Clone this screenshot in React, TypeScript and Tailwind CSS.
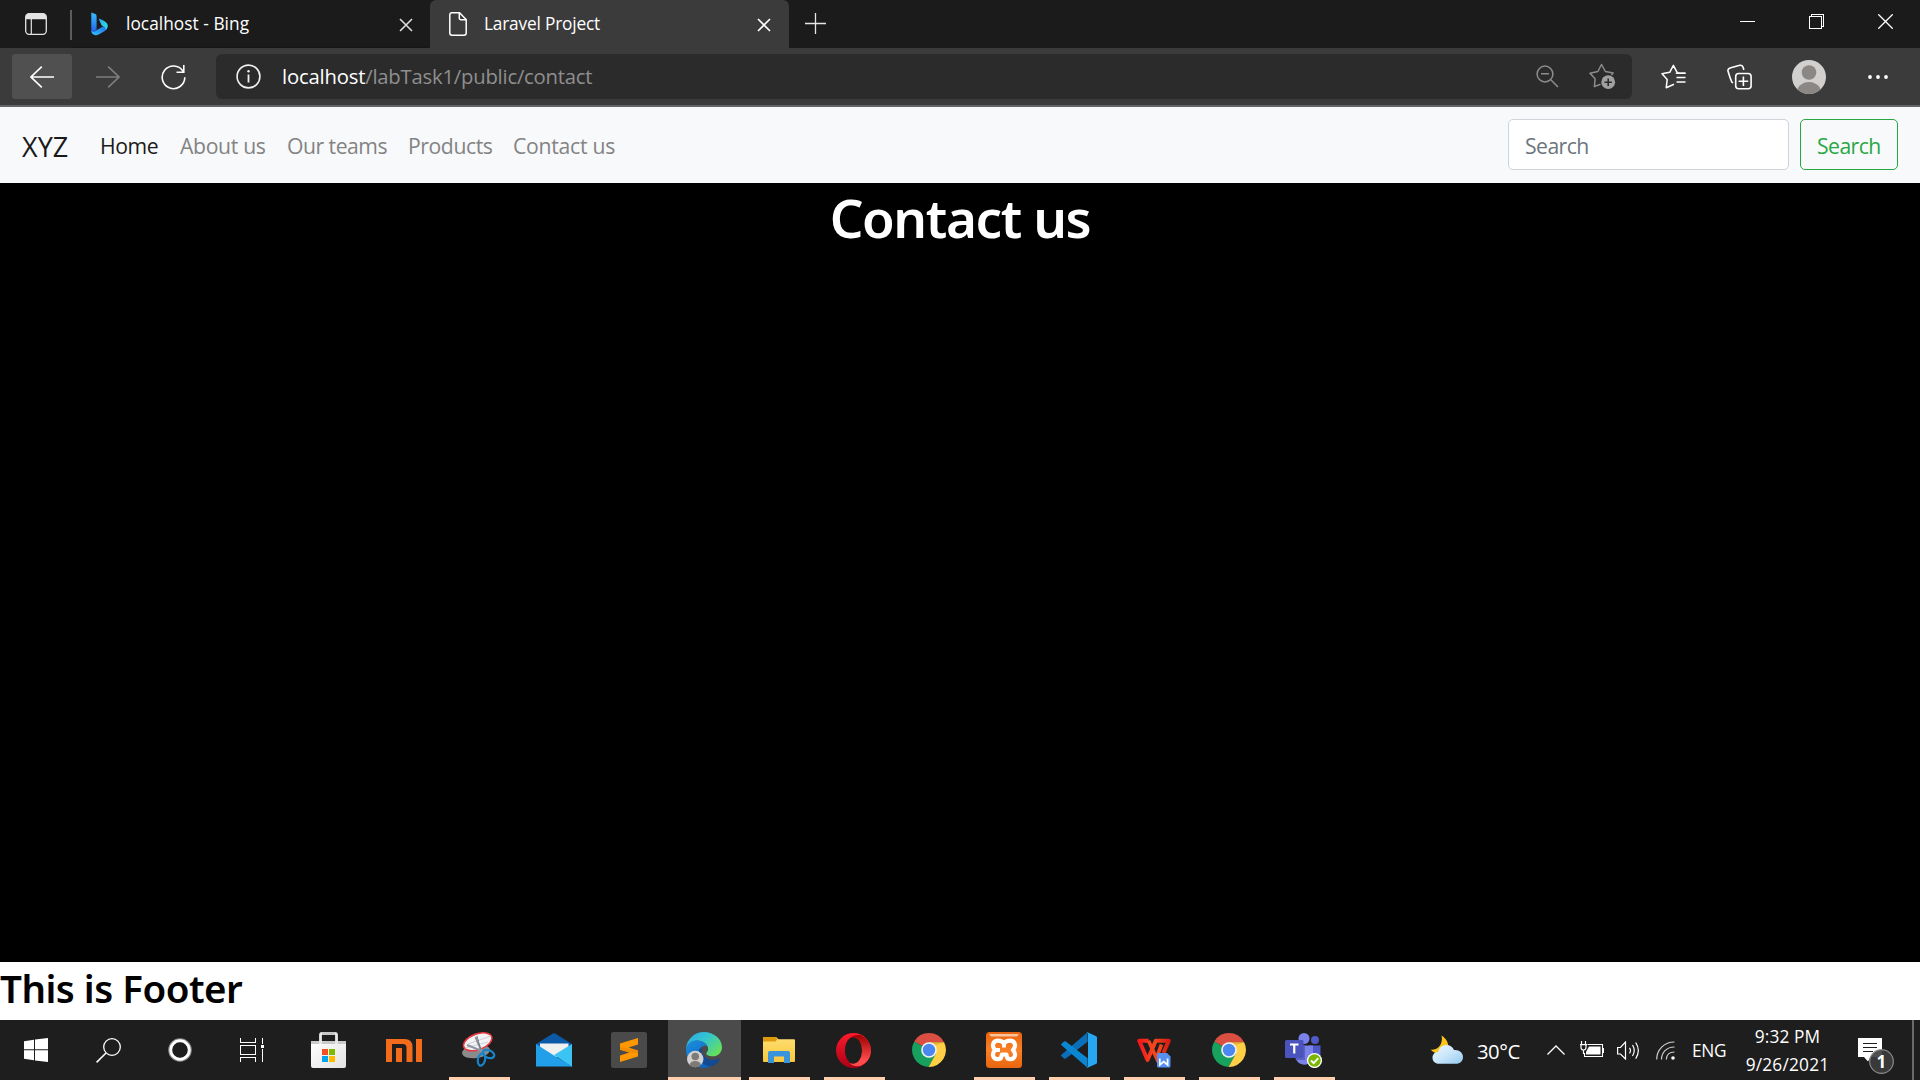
import React from "react";

type P = { className?: string };

const stroke = { fill: "none", stroke: "currentColor", strokeWidth: 1.5 };

/* ---------- browser chrome icons ---------- */

const TabActionsIcon = () => (
  <svg width="22" height="22" viewBox="0 0 22 22" className="text-[#e4e4e4]">
    <rect x="0.7" y="0.7" width="20.6" height="20.6" rx="3.5" {...stroke} strokeWidth={1.3} />
    <path d="M0.7 6.3V4.2A3.5 3.5 0 0 1 4.2 0.7h13.6a3.5 3.5 0 0 1 3.5 3.5v2.1z" fill="currentColor" />
    <path d="M6.3 6v15.300" {...stroke} strokeWidth={1.2} />
  </svg>
);

const BingIcon = () => (
  <svg width="17" height="24" viewBox="0 0 17 24">
    <defs>
      <linearGradient id="bingStem" x1="0" y1="0" x2="0" y2="1">
        <stop offset="0" stopColor="#37bdff" />
        <stop offset="0.55" stopColor="#2b8bf5" />
        <stop offset="1" stopColor="#1d56e8" />
      </linearGradient>
      <linearGradient id="bingTail" x1="0" y1="1" x2="1" y2="0">
        <stop offset="0" stopColor="#2fc5ff" />
        <stop offset="0.5" stopColor="#2a94f0" />
        <stop offset="1" stopColor="#1b63e0" />
      </linearGradient>
      <linearGradient id="bingWing" x1="0" y1="0" x2="1" y2="1">
        <stop offset="0" stopColor="#2aa7ea" />
        <stop offset="1" stopColor="#2ee8e2" />
      </linearGradient>
    </defs>
    <path d="M0.500 0.600 4.300 1.900Q5.600 2.500 5.600 4V17.500L1.600 21.500Q0.300 20.200 0.300 18.400V1Z" fill="url(#bingStem)" />
    <path d="M5.600 18.200 11 15Q13.600 13.600 15.900 12.300C17 15 16.200 17.400 13.800 18.900L7.600 22.600C4.600 24.200 0.300 22.600 0.300 18.400 1.500 20.500 3.700 19.800 5.600 18.200Z" fill="url(#bingTail)" />
    <path d="M8 7.400C7.700 6.500 8.400 6.700 8.900 6.900 12.500 8.300 15.200 9.600 16.200 11.800 17.300 14.200 16.200 16.700 14.900 17.900 15 15.700 13.700 14.700 10.700 13.500 9.600 11.400 8.900 9.600 8 7.400Z" fill="url(#bingWing)" />
  </svg>
);

const CloseIcon = ({ className }: P) => (
  <svg width="14" height="14" viewBox="0 0 14 14" className={className}>
    <path d="M1 1l12 12M13 1 1 13" {...stroke} strokeWidth={1.6} />
  </svg>
);

const FileIcon = () => (
  <svg width="18" height="24" viewBox="0 0 18 24" className="text-white">
    <path d="M3 0.800h7.500L17.200 7.500V21a2.200 2.200 0 0 1-2.200 2.200H3A2.200 2.200 0 0 1 0.800 21V3A2.200 2.200 0 0 1 3 0.800ZM10.300 1v5.200a1.600 1.600 0 0 0 1.600 1.600H17" {...stroke} />
  </svg>
);

const PlusIcon = () => (
  <svg width="21" height="21" viewBox="0 0 21 21" className="text-[#e6e6e6]">
    <path d="M10.500 0v21M0 10.500h21" {...stroke} strokeWidth={1.300} />
  </svg>
);

const ArrowIcon = ({ className }: P) => (
  <svg width="24" height="22" viewBox="0 0 24 22" className={className}>
    <path d="M24 11H1M11.800 0.600 1 11l10.800 10.400" {...stroke} strokeWidth={1.6} />
  </svg>
);

const ReloadIcon = () => (
  <svg width="25" height="26" viewBox="0 0 25 26" className="text-white">
    <path d="M22 7.200A11.300 11.300 0 1 0 23.800 13.300M22.800 1v7.200H15.500" {...stroke} strokeWidth={1.6} />
  </svg>
);

const InfoIcon = () => (
  <svg width="25" height="25" viewBox="0 0 25 25" className="text-[#f0f0f0]">
    <circle cx="12.500" cy="12.500" r="11.400" {...stroke} strokeWidth={1.6} />
    <path d="M12.500 10.500v8" {...stroke} strokeWidth={1.8} />
    <circle cx="12.500" cy="7.200" r="1.200" fill="currentColor" />
  </svg>
);

const ZoomOutIcon = () => (
  <svg width="23" height="23" viewBox="0 0 23 23" className="text-[#8d8d8d]">
    <circle cx="9" cy="9" r="7.900" {...stroke} />
    <path d="M14.800 14.800 22 22M5 8.800h8" {...stroke} />
  </svg>
);

const AddFavoriteIcon = () => (
  <svg width="27" height="27" viewBox="0 0 27 27" className="text-[#8d8d8d]">
    <path d="M11.500 21.200 5.400 23.600 6.100 15.800 1 10.200 8.900 8.500 12.500 1.500 16.400 8.500 24.200 9.900 22.500 12" {...stroke} strokeLinejoin="round" />
    <circle cx="19.200" cy="19.200" r="6.900" fill="#a0a0a0" />
    <path d="M19.200 15.500v7.400M15.500 19.200h7.400" fill="none" stroke="#2b2b2b" strokeWidth="1.600" />
  </svg>
);

const FavoritesIcon = () => (
  <svg width="25" height="25" viewBox="0 0 25 25" className="text-white">
    <path d="M13 20.200 5.200 23.800 6.200 15.400 1 9.800 8.700 8.300 12.400 1.300 15.800 7.800Q16.200 8.800 17.500 9.300H24.500" {...stroke} strokeLinejoin="round" />
    <path d="M14.800 9.300H24.500M15.500 13.500H24.500M15.500 18H24.500" {...stroke} strokeWidth={1.6} />
  </svg>
);

const CollectionsIcon = () => (
  <svg width="25" height="26" viewBox="0 0 25 26" className="text-white">
    <rect x="8.700" y="9.500" width="15.400" height="15.300" rx="3" {...stroke} strokeWidth={1.6} />
    <path d="M16.400 12.500v9.600M11.600 17.200h9.600" {...stroke} strokeWidth={1.6} />
    <path d="M6 19 4.800 18Q3 14 1.100 7.500C0.600 5.800 1.300 4.500 3 4L12.800 1.300C14.500 0.900 15.700 1.700 16.200 3.400L16.800 6" {...stroke} strokeWidth={1.6} />
  </svg>
);

const Avatar = ({ className }: P) => (
  <svg viewBox="0 0 34 34" className={className}>
    <clipPath id="avatarClip"><circle cx="17" cy="17" r="17" /></clipPath>
    <g clipPath="url(#avatarClip)">
      <rect width="34" height="34" fill="#d2d0ce" />
      <circle cx="17" cy="12.500" r="7.300" fill="#8b8785" />
      <ellipse cx="17" cy="33.500" rx="12.500" ry="11.500" fill="#8b8785" />
    </g>
  </svg>
);

const DotsIcon = () => (
  <svg width="20" height="4" viewBox="0 0 20 4" fill="#fff">
    <circle cx="2" cy="2" r="1.900" /><circle cx="10" cy="2" r="1.900" /><circle cx="18" cy="2" r="1.900" />
  </svg>
);

/* ---------- taskbar icons ---------- */

const StartIcon = () => (
  <svg width="24" height="24" viewBox="0 0 24 24" fill="#fff">
    <path d="M0 3.300 10 1.700V11.200H0zM11 1.600 24 0V11.200H11zM0 12.200H10V22.300L0 20.700zM11 12.200H24V24L11 22.400z" />
  </svg>
);

const SearchIcon = () => (
  <svg width="25" height="25" viewBox="0 0 25 25" className="text-white">
    <circle cx="16" cy="9" r="8.300" {...stroke} strokeWidth={1.3} />
    <path d="M10 15 0.600 24.400" {...stroke} strokeWidth={1.5} />
  </svg>
);

const CortanaIcon = () => (
  <svg width="24" height="24" viewBox="0 0 24 24">
    <circle cx="12" cy="12" r="9.800" fill="none" stroke="#8a8a8a" strokeWidth="4" />
    <circle cx="12" cy="12" r="9.300" fill="none" stroke="#fff" strokeWidth="2.700" />
  </svg>
);

const TaskViewIcon = () => (
  <svg width="24" height="24" viewBox="0 0 24 24" className="text-white" shapeRendering="crispEdges">
    <path d="M0.500 0V4.500H15.500V0M0.500 24V19.500H15.500V24M0.500 7.500H15.500V16.500H0.500ZM22.500 0V6M22.500 11V24" {...stroke} strokeWidth={1} />
    <rect x="21" y="7" width="3" height="3" fill="#fff" />
  </svg>
);

const StoreIcon = () => (
  <svg width="35" height="36" viewBox="0 0 35 36">
    <defs><linearGradient id="bag" x1="0" y1="0" x2="1" y2="1"><stop offset="0" stopColor="#fff" /><stop offset="1" stopColor="#e2e2e2" /></linearGradient></defs>
    <path d="M0 9H35V34Q35 36 33 36H2Q0 36 0 34Z" fill="url(#bag)" />
    <path d="M0 9H35V12H0Z" fill="#c9cbcb" />
    <path d="M9.500 12V3Q9.500 1.500 11 1.500H24Q25.500 1.500 25.500 3V12" fill="none" stroke="#e9e9e9" strokeWidth="2.800" />
    <path d="M11 1.500H24" stroke="#c4c6c6" strokeWidth="2.800" />
    <path d="M11 17h6v6h-6z" fill="#f25022" /><path d="M18 17h6v6h-6z" fill="#7fba00" />
    <path d="M11 24h6v6h-6z" fill="#00a4ef" /><path d="M18 24h6v6h-6z" fill="#ffb900" />
  </svg>
);

const MiIcon = () => (
  <svg width="36" height="23" viewBox="0 0 36 23" fill="#f26c1c">
    <path d="M0 0H18.500Q26.500 0 26.500 8V23H20.500V8.500Q20.500 5 17 5H6V23H0ZM10 9H16V23H10ZM30 0H36V23H30Z" />
  </svg>
);

const SnipIcon = () => (
  <svg width="36" height="36" viewBox="0 0 36 36">
    <ellipse cx="15" cy="19.500" rx="14" ry="6.500" transform="rotate(-8 15 19.500)" fill="#8b8b8b" />
    <ellipse cx="16.700" cy="9.800" rx="14.800" ry="7.900" transform="rotate(-20 16.700 9.800)" fill="#f4f4f6" stroke="#e83a42" strokeWidth="1.600" />
    <path d="M7 12 30 4M4 16 27 10" stroke="#c5cbd3" strokeWidth="0.900" />
    <path d="M14.500 5 21 20M6 13 21 19" stroke="#8f959e" strokeWidth="2" />
    <path d="M16 4 19.500 17.500" stroke="#6a7079" strokeWidth="0.800" />
    <ellipse cx="27.500" cy="22" rx="6" ry="3.800" transform="rotate(22 27.500 22)" fill="none" stroke="#1785cb" strokeWidth="2.200" />
    <ellipse cx="20.500" cy="27.500" rx="3.600" ry="6.200" transform="rotate(12 20.500 27.500)" fill="none" stroke="#1785cb" strokeWidth="2.200" />
  </svg>
);

const MailIcon = () => (
  <svg width="36" height="34" viewBox="0 0 36 34">
    <path d="M0 11 16.500 0.700Q18 0 19.500 0.700L36 11V17H0Z" fill="#0c59a8" />
    <path d="M4 10.500H32.500V15L18 26 4 15Z" fill="#f0f0f0" />
    <path d="M36 11 18 22 36 34Z" fill="#3bc4f3" />
    <path d="M0 11 18 22.500 36 33.500H0Z" fill="#219fe8" />
  </svg>
);

const SublimeIcon = () => (
  <svg width="36" height="36" viewBox="0 0 36 36">
    <rect width="36" height="36" rx="2.500" fill="#4a4a4a" />
    <path d="M9 11.500 27 6V12.500L17.500 15.600 27 18.500V24.500L9 30V23.500L18.500 20.600 9 17.700Z" fill="#ff9800" />
    <path d="M9 17.700V15L27 18.500V21L18.500 20.600Z" fill="#f08c00" />
  </svg>
);

const EdgeIcon = () => (
  <svg width="36" height="36" viewBox="0 0 36 36">
    <defs>
      <linearGradient id="edgeTop" x1="0" y1="0" x2="1" y2="0.700"><stop offset="0" stopColor="#2aa8e8" /><stop offset="0.500" stopColor="#34c6cf" /><stop offset="1" stopColor="#66e05a" /></linearGradient>
      <linearGradient id="edgeMid" x1="0" y1="0" x2="0.600" y2="1"><stop offset="0" stopColor="#1b8fe0" /><stop offset="1" stopColor="#1064c0" /></linearGradient>
    </defs>
    <path d="M0 17C0.500 7.500 8.300 0 18 0S36 7 36 15.200C36 20.800 31.600 24.300 26.800 24.300 22.500 24.300 20.300 22.700 20.300 21.500 20.300 20.500 22.200 19.600 22.200 17 22.200 12.500 17 8.500 11 8.500 5.500 8.500 1.500 12 0 17Z" fill="url(#edgeTop)" />
    <path d="M0 17C1.500 11 6.500 8.500 11 8.500 17 8.500 20.300 12 21.200 14.200 17.500 12.500 12.500 16 12.500 21.500 12.500 28.500 18.500 34 25 34 22.800 35.300 20.400 36 18 36 8 36 -0.500 28 0 17Z" fill="url(#edgeMid)" />
    <path d="M12.500 21.500C12.500 19 13.500 16.500 15.500 15 14.500 22 20 28 27 28 30 28 32 26.600 33 26.600 34.200 26.600 33 29.300 31 31.300 28.500 33.800 26 34.500 23.500 34.200 17 33.500 12.500 28 12.500 21.500Z" fill="#134a94" />
    <g transform="translate(1 18.500) scale(0.5)">
      <circle cx="16.500" cy="17" r="16.500" fill="#d2d0ce" />
      <circle cx="16.500" cy="12" r="7.500" fill="#7d7a78" />
      <path d="M5 29Q7 21 16.500 21T28 29Q23 33.500 16.500 33.500T5 29Z" fill="#7d7a78" />
    </g>
  </svg>
);

const ExplorerIcon = () => (
  <svg width="32" height="26" viewBox="0 0 32 26">
    <defs><linearGradient id="folder" x1="0" y1="0" x2="0" y2="1"><stop offset="0" stopColor="#ffde72" /><stop offset="1" stopColor="#f8c83a" /></linearGradient></defs>
    <path d="M0 1Q0 0 1 0H13L15.500 2.300H31Q32 2.300 32 3.300V24Q32 25 31 25H1Q0 25 0 24Z" fill="url(#folder)" />
    <path d="M0 1Q0 0 1 0H12.500L14.500 2 12.500 4.500H0Z" fill="#dd9a0b" />
    <path d="M5 26V16Q5 14 7 14H25Q27 14 27 16V26H21V19.500H11V26Z" fill="#3a94dc" />
  </svg>
);

const OperaIcon = () => (
  <svg width="35" height="35" viewBox="0 0 35 35">
    <defs>
      <linearGradient id="operaA" x1="0" y1="0" x2="0" y2="1"><stop offset="0" stopColor="#ff1b2d" /><stop offset="1" stopColor="#a70014" /></linearGradient>
      <linearGradient id="operaB" x1="0" y1="0" x2="0" y2="1"><stop offset="0" stopColor="#9c0000" /><stop offset="0.800" stopColor="#ff4b4b" /></linearGradient>
    </defs>
    <path fillRule="evenodd" d="M17.500 0A17.500 17.500 0 1 0 17.500 35 17.500 17.500 0 0 0 17.500 0ZM18 3.800C22.500 3.800 26 9.500 26 17.500S22.500 31.200 18 31.200 9 25.500 9 17.500 13 3.800 18 3.800Z" fill="url(#operaA)" />
    <path d="M13.500 5.200C16 2.300 21 1.800 24 2 30 4.500 35 10 35 17.500 35 25 30 31 24 33 20 33.500 16 33 13.500 30 20 33 26 27 26 17.500S20 2.500 13.500 5.200Z" fill="url(#operaB)" />
  </svg>
);

const ChromeIcon = () => (
  <svg width="34" height="34" viewBox="0 0 34 34">
    <path d="M17 17 2.300 8.500A17 17 0 0 1 31.800 8.700L32 9.300H17Z" fill="#db4f43" />
    <path d="M17 17 2.300 8.500A17 17 0 0 0 16.600 34L24 21Z" fill="#17a05e" />
    <path d="M17 9.300H32.100A17 17 0 0 1 16.600 34L23.700 21Z" fill="#ffd045" />
    <path d="M17 9.300H32.100L24 12Z" fill="#c9912b" opacity="0.450" />
    <circle cx="17" cy="17" r="7.800" fill="#f3f3f3" />
    <circle cx="17" cy="17" r="6.200" fill="#4a87f0" />
  </svg>
);

const XamppIcon = () => (
  <svg width="36" height="36" viewBox="0 0 36 36">
    <defs><linearGradient id="xampp" x1="0" y1="0" x2="0" y2="1"><stop offset="0" stopColor="#e8640f" /><stop offset="0.500" stopColor="#fb7f25" /><stop offset="1" stopColor="#e8660f" /></linearGradient></defs>
    <rect width="36" height="36" rx="3.500" fill="url(#xampp)" />
    <path d="M3 2H33L31 4.500H5Z" fill="#fcc49a" />
    <path d="M18 11.500C16.500 9.300 14.500 8.700 12 8.700 7 8.700 5.300 14 9 18 5.300 22 7 27.200 12 27.200 14.500 27.200 15.800 25.500 15.800 22.500H20.500C20.500 25.500 21.500 27.200 24 27.200 29 27.200 30.700 22 27 18 30.700 14 29 8.700 24 8.700 21.500 8.700 19.500 9.300 18 11.500Z" fill="none" stroke="#fff" strokeWidth="4.200" strokeLinejoin="round" />
    <path d="M18 12V15.500M9.500 18H14" fill="none" stroke="#fff" strokeWidth="3.800" />
  </svg>
);

const VsCodeIcon = () => (
  <svg width="36" height="36" viewBox="0 0 36 36">
    <path d="M26.500 0.200V10L4.500 26.700Q3.700 27 3 26.500L0.500 24.300Q-0.300 23.500 0.500 22.700Z" fill="#0a6fb8" />
    <path d="M26.500 35.800V26L4.500 9.300Q3.700 9 3 9.500L0.500 11.700Q-0.300 12.500 0.500 13.300Z" fill="#0b86d1" />
    <path d="M26.500 0.200 34.800 3.900Q36 4.400 36 5.600V30.400Q36 31.600 34.800 32.100L26.500 35.800Q25.500 36 24.800 35.200 27 36 27 33.800V2.200Q27 0 24.800 0.800 25.500 0 26.500 0.200Z" fill="#27a7f2" />
    <path d="M26.800 10V26L16.300 18Z" fill="#1e1e1e" />
  </svg>
);

const WpsIcon = () => (
  <svg width="36" height="36" viewBox="0 0 36 36">
    <defs><linearGradient id="wps" x1="0" y1="0" x2="1" y2="0"><stop offset="0" stopColor="#f5161c" /><stop offset="0.500" stopColor="#f4471f" /><stop offset="1" stopColor="#d91d12" /></linearGradient></defs>
    <path d="M12.500 8.800H3.200L11.500 28 19.800 8.800H32.800L27.500 21" fill="none" stroke="url(#wps)" strokeWidth="4" strokeLinejoin="round" />
    <path d="M12.500 8.800 20.500 26 25.500 12.500" fill="none" stroke="#f4431f" strokeWidth="3.600" />
    <path d="M21 22.500Q21 21 22.500 21H31L34.500 24.500V34Q34.500 35.500 33 35.500H22.500Q21 35.500 21 34Z" fill="#5590f2" />
    <path d="M23.800 26.500V32.800L27.700 29.500 31.600 32.800V26.500" fill="none" stroke="#fff" strokeWidth="1.700" />
  </svg>
);

const TeamsIcon = () => (
  <svg width="38" height="36" viewBox="0 0 38 36">
    <circle cx="30" cy="8" r="4" fill="#5059c9" />
    <path d="M24 13.500H35.500V22C35.500 28 31 30 27 29Z" fill="#5059c9" />
    <circle cx="19" cy="6.500" r="5.500" fill="#7b83eb" />
    <path d="M10.500 13.500H28V24C28 36 10.500 35 10.500 24Z" fill="#7b83eb" />
    <path d="M10.500 13.500H20V28H10.800Z" fill="#5a62c3" />
    <rect x="0" y="8" width="18.500" height="18" rx="1.500" fill="#4b53bc" />
    <path d="M5 12.500H13.500M9.250 12.500V21.500" stroke="#fff" strokeWidth="2.200" />
    <circle cx="29.500" cy="28.500" r="7.600" fill="#fff" />
    <circle cx="29.500" cy="28.500" r="6.200" fill="#7ab800" />
    <path d="M26 28.500 28.700 31.200 33.300 26.200" fill="none" stroke="#fff" strokeWidth="1.900" />
  </svg>
);

const WeatherIcon = () => (
  <svg width="34" height="30" viewBox="0 0 34 30">
    <defs><linearGradient id="cloud" x1="0" y1="0" x2="1" y2="1"><stop offset="0" stopColor="#eef8ff" /><stop offset="0.500" stopColor="#c9e6fa" /><stop offset="1" stopColor="#94c9f0" /></linearGradient></defs>
    <path d="M11.500 0.500C16.500 3.500 19.500 9 17.500 14 14 20 5 20 0.500 14.500 8.500 16 13.500 8 11.500 0.500Z" fill="#fcc419" />
    <path d="M9 28.800C5 28.800 2.500 26 2.500 22.700 2.500 19.500 5 17 8.300 16.800 9 12.500 12.500 10 16.500 10 20 10 23 12 24 15 29 14.500 33 17.500 33 22 33 26 30 28.800 26 28.800Z" fill="url(#cloud)" />
  </svg>
);

const ChevronIcon = () => (
  <svg width="18" height="10" viewBox="0 0 18 10" className="text-white">
    <path d="M0.500 9.500 9 1 17.500 9.500" {...stroke} strokeWidth={1.3} />
  </svg>
);

const BatteryIcon = () => (
  <svg width="24" height="17" viewBox="0 0 24 17" className="text-white">
    <path d="M7.500 3.500H22.500V15.500H4.500V12" {...stroke} strokeWidth={1.1} />
    <path d="M23.400 7V12" {...stroke} strokeWidth={1.2} />
    <path d="M9 5.500H20.500V13.500H6V11Z" fill="#fff" />
    <path d="M1.500 0V3.500M5.500 0V3.500M0 3.700H7M1 3.700V6.500Q1 9 3.500 9T6 6.500V3.700M3.500 9V13" {...stroke} strokeWidth={1.2} />
  </svg>
);

const VolumeIcon = () => (
  <svg width="23" height="19" viewBox="0 0 23 19" className="text-white">
    <path d="M0.600 6.500H3.500L8.500 1V18L3.500 13H0.600Z" {...stroke} strokeWidth={1.2} />
    <path d="M12.500 6.800Q14.500 9.500 12.500 12.300M15.500 4Q19 9.500 15.500 15M18.700 1.500Q24 9.500 18.700 17.800" {...stroke} strokeWidth={1.2} />
  </svg>
);

const WifiIcon = () => (
  <svg width="19" height="19" viewBox="0 0 19 19" className="text-[#cfcfcf]">
    <path d="M0.700 18.500C0.700 9 8 1 18.500 1M5.500 18.500C5.500 11.500 10.500 6 18.500 6M10.300 18.500C10.300 14 13.500 11 18.500 11" {...stroke} strokeWidth={1.2} />
    <circle cx="17" cy="17" r="1.800" fill="#fff" />
  </svg>
);

const NotificationIcon = () => (
  <svg width="37" height="37" viewBox="0 0 37 37">
    <path d="M0 0H24V19H12.500L10 23.500 6 19H0Z" fill="#fff" />
    <path d="M5 5.500H19M5 9.500H19M5 13.500H15" stroke="#1e1e1e" strokeWidth="1.100" />
    <circle cx="23.500" cy="23.500" r="11.800" fill="#3c3c3ce8" stroke="#8a8a8a" strokeWidth="1.200" />
  </svg>
);

/* ---------- page parts ---------- */

const TabStrip = () => (
  <div className="flex h-12 bg-[#1b1b1b] text-[17.3px] text-white">
    <div className="flex h-12 w-[70px] items-center pl-[25px]"><TabActionsIcon /></div>
    <div className="mt-2.5 h-[30px] w-[2px] bg-[#5c5c5c]" />
    <div className="flex h-12 w-[358px] items-center rounded-br-[5px] border-b border-[#151515] pl-[19px]">
      <BingIcon />
      <span className="ml-[18px] w-[273px] whitespace-nowrap leading-none tracking-[0.04px]">localhost - Bing</span>
      <CloseIcon className="mt-[3px] text-[#dcdcdc]" />
    </div>
    <div className="flex h-12 w-[359px] items-center rounded-t-[6px] bg-[#3b3b3b] pl-[19px]">
      <FileIcon />
      <span className="-mt-px ml-[17px] w-[273px] whitespace-nowrap leading-none tracking-[-0.19px]">Laravel Project</span>
      <CloseIcon className="mt-0.5 text-white" />
    </div>
    <div className="flex h-12 w-12 items-center pb-px pl-4"><PlusIcon /></div>
    <div className="ml-auto flex h-[43px] items-center">
      <div className="flex w-[69px] justify-center"><span className="h-px w-[15px] bg-white" /></div>
      <div className="flex w-[69px] justify-center">
        <svg width="15" height="15" viewBox="0 0 15 15" className="text-white" shapeRendering="crispEdges">
          <path d="M0.500 2.500H12.500V14.500H0.500ZM2.500 2.500V0.500H14.500V12.500H12.500" {...stroke} strokeWidth={1} />
        </svg>
      </div>
      <div className="flex w-[69px] justify-center">
        <svg width="15" height="15" viewBox="0 0 15 15" className="text-white">
          <path d="M0.300 0.300 14.700 14.700M14.700 0.300 0.300 14.700" {...stroke} strokeWidth={1.3} />
        </svg>
      </div>
    </div>
  </div>
);

const Toolbar = () => (
  <div className="flex h-[59px] items-start border-b-2 border-[#656565] bg-[#3b3b3b] pt-1.5">
    <div className="ml-3 flex h-[45px] w-[60px] items-center justify-center rounded-[3px] bg-[#505050]"><ArrowIcon className="text-white" /></div>
    <div className="ml-1.5 flex h-[45px] w-[60px] items-center justify-center"><ArrowIcon className="rotate-180 text-[#7e7e7e]" /></div>
    <div className="ml-[5px] flex h-[45px] w-[61px] items-center justify-center"><ReloadIcon /></div>
    <div className="ml-3 flex h-[45px] w-[1416px] items-center rounded-[6px] bg-[#2b2b2b] pl-5 pr-4 text-[20.3px] leading-none">
      <InfoIcon />
      <span className="ml-[21px] whitespace-nowrap tracking-[-0.2px] text-white">localhost</span>
      <span className="whitespace-nowrap tracking-[-0.22px] text-[#8f8f8f]">/labTask1/public/contact</span>
      <div className="ml-auto flex items-center gap-[30px]"><ZoomOutIcon /><AddFavoriteIcon /></div>
    </div>
    <div className="ml-auto flex h-[45px] items-center pr-8">
      <FavoritesIcon />
      <div className="ml-[41px]"><CollectionsIcon /></div>
      <Avatar className="ml-10 size-[34px]" />
      <div className="ml-[42px]"><DotsIcon /></div>
    </div>
  </div>
);

const Navbar = () => (
  <nav className="flex h-[76px] items-center bg-[#f8f9fa] pl-[22px] text-[21.2px] leading-none text-[#838384]">
    <div className="flex items-center whitespace-nowrap pt-0.5">
      <span className="w-[78px] text-[27px] tracking-[0.05px] text-[#1a1a1a]">XYZ</span>
      <span className="w-[80px] tracking-[-0.4px] text-[#1a1a1a]">Home</span>
      <span className="w-[107px] tracking-[-0.33px]">About us</span>
      <span className="w-[121px] tracking-[-0.51px]">Our teams</span>
      <span className="w-[105px] tracking-[-0.43px]">Products</span>
      <span className="tracking-[-0.26px]">Contact us</span>
    </div>
    <div className="mb-px ml-auto mr-[22px] flex gap-[11px]">
      <div className="flex h-[51px] w-[281px] items-center rounded-[5px] border border-[#ced4da] bg-white pl-4 pt-[3px] tracking-[-0.56px] text-[#6c757d]">Search</div>
      <div className="flex h-[51px] w-[98px] items-center rounded-[5px] border border-[#28a745] pl-4 pt-[3px] tracking-[-0.56px] text-[#28a745]">Search</div>
    </div>
  </nav>
);

const apps: { icon: React.ReactNode; open?: boolean; active?: boolean }[] = [
  { icon: <StoreIcon /> },
  { icon: <MiIcon /> },
  { icon: <SnipIcon />, open: true },
  { icon: <MailIcon /> },
  { icon: <SublimeIcon /> },
  { icon: <EdgeIcon />, active: true },
  { icon: <ExplorerIcon />, open: true },
  { icon: <OperaIcon />, open: true },
  { icon: <ChromeIcon /> },
  { icon: <XamppIcon />, open: true },
  { icon: <VsCodeIcon />, open: true },
  { icon: <WpsIcon />, open: true },
  { icon: <ChromeIcon />, open: true },
  { icon: <TeamsIcon />, open: true },
];

const Taskbar = () => (
  <div className="flex h-[60px] bg-[#1e1e1e] text-[17.3px] leading-none text-white">
    {[<StartIcon />, <SearchIcon />, <CortanaIcon />, <TaskViewIcon />].map((icon, i) => (
      <div key={i} className="flex w-[72px] items-center justify-center">{icon}</div>
    ))}
    <div className="ml-1 flex">
      {apps.map(({ icon, open, active }, i) => (
        <div key={i} className="flex w-[75px] flex-col items-center">
          <div className={active ? "flex h-[57px] w-[73px] items-center justify-center bg-[#4b4b4b] pr-px pt-[3px]" : "flex h-[57px] items-center justify-center pr-[2px] pt-[3px]"}>{icon}</div>
          <div className={active ? "h-[3px] w-[73px] bg-[#ffcfae]" : open ? "h-[3px] w-[61px] bg-[#ffcfae]" : "h-[3px]"} />
        </div>
      ))}
    </div>
    <div className="ml-auto flex items-center">
      <WeatherIcon />
      <span className="ml-[13px] w-[70px] whitespace-nowrap pt-[3px] text-[20.3px] tracking-[-0.5px]">30°C</span>
      <ChevronIcon />
      <div className="ml-[15px] mb-px"><BatteryIcon /></div>
      <div className="ml-[13px]"><VolumeIcon /></div>
      <div className="ml-4"><WifiIcon /></div>
      <span className="ml-[17px] w-[54px] pt-px tracking-[-0.31px]">ENG</span>
      <div className="flex w-[83px] flex-col items-center gap-2.5 whitespace-nowrap pt-px">
        <span className="tracking-[0.1px]">9:32 PM</span>
        <span className="tracking-[0.2px]">9/26/2021</span>
      </div>
      <div className="relative ml-[29px] mt-[13px]">
        <NotificationIcon />
        <span className="absolute left-[18.500px] top-[15px] text-[17px] font-bold">1</span>
      </div>
      <div className="ml-[17px] h-[60px] w-[2px] bg-[#6a6a6a]" />
      <div className="w-1.5" />
    </div>
  </div>
);

export default function App() {
  return (
    <div className="flex h-[1080px] w-[1920px] flex-col overflow-hidden bg-white font-['Open_Sans','Noto_Sans',sans-serif]">
      <TabStrip />
      <Toolbar />
      <Navbar />
      <main className="h-[779px] bg-black text-center">
        <h1 className="font-['Noto_Sans',sans-serif] text-[53px] font-semibold leading-[69px] tracking-[-1.4px] text-white">Contact us</h1>
      </main>
      <footer className="h-[58px] bg-white">
        <h2 className="font-['Noto_Sans',sans-serif] text-[38.5px] font-semibold leading-[53px] tracking-[-0.5px] text-black">This is Footer</h2>
      </footer>
      <Taskbar />
    </div>
  );
}
